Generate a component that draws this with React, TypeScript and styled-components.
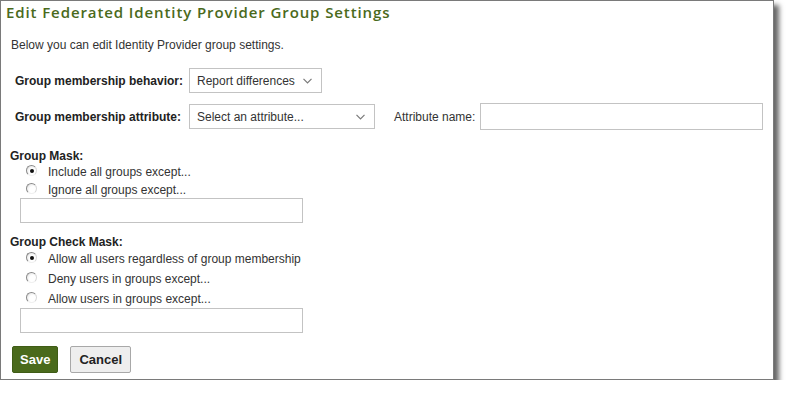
import React from "react";
import styled, { createGlobalStyle } from "styled-components";

const Global = createGlobalStyle`
  html, body { margin: 0; padding: 0; background: #ffffff; }
  body { font-family: "Liberation Sans", Arial, sans-serif; font-size: 12px; color: #333333; }
`;

const Frame = styled.div`
  width: 772px;
  border: 1px solid #7a7a7a;
  background: #ffffff;
  box-shadow: 5px 5px 5px rgba(0, 0, 0, 0.6);
`;

const Title = styled.h1`
  margin: 1px 0 0 5px;
  font-family: "Open Sans", sans-serif;
  font-weight: 600;
  font-size: 15px;
  letter-spacing: 0.9px;
  line-height: 21px;
  color: #4a6a1c;
`;

const Body = styled.div`
  padding: 0 10px 6px 9px;
`;

const Intro = styled.p`
  margin: 15px 0 0 1px;
  line-height: 14px;
  color: #333333;
`;

const FieldRow = styled.div<{ $top: number }>`
  display: flex;
  align-items: center;
  margin-top: ${(p) => p.$top}px;
  padding-left: 5px;
`;

const FieldLabel = styled.label`
  flex: none;
  width: 174px;
  font-weight: bold;
  color: #222222;
  line-height: 14px;
  white-space: nowrap;
`;

const SelectBox = styled.div<{ $width: number }>`
  flex: none;
  box-sizing: border-box;
  width: ${(p) => p.$width}px;
  height: 25px;
  border: 1px solid #c3c3c3;
  background: #ffffff;
  display: flex;
  align-items: center;
  justify-content: space-between;
  padding: 0 9px 0 7px;
  color: #333333;
  white-space: nowrap;
`;

const InlineLabel = styled.label`
  flex: none;
  margin: 0 5px 0 19px;
  color: #333333;
  white-space: nowrap;
`;

const TextInput = styled.input<{ $width: number; $height: number }>`
  flex: none;
  box-sizing: border-box;
  width: ${(p) => p.$width}px;
  height: ${(p) => p.$height}px;
  border: 1px solid #c3c3c3;
  margin: 0;
  padding: 0 4px;
  font: inherit;
  outline: none;
`;

const Section = styled.div<{ $top: number }>`
  margin-top: ${(p) => p.$top}px;
`;

const SectionTitle = styled.div`
  font-weight: bold;
  color: #222222;
  line-height: 12px;
`;

const RadioList = styled.div`
  padding: 1px 0 0 16px;
`;

const RadioRow = styled.label<{ $h: number }>`
  display: flex;
  align-items: center;
  height: ${(p) => p.$h}px;
  color: #333333;
`;

const RadioCircle = styled.span<{ $checked: boolean }>`
  box-sizing: border-box;
  width: 11px;
  height: 11px;
  border-radius: 50%;
  border: 1px solid;
  border-color: #8a8a8a #d8d8d8 #f0f0f0 #8a8a8a;
  background: radial-gradient(circle at 65% 65%, #ffffff 40%, #dcdcdc 100%);
  margin: -3px 11px 0 0;
  display: flex;
  align-items: center;
  justify-content: center;
  &::after {
    content: "";
    display: ${(p) => (p.$checked ? "block" : "none")};
    width: 4px;
    height: 4px;
    border-radius: 50%;
    background: #111111;
  }
`;

const MaskInput = styled(TextInput)`
  margin: -1px 0 0 10px;
  display: block;
`;

const ButtonRow = styled.div`
  display: flex;
  gap: 12px;
  margin-top: 13px;
  padding-left: 2px;
`;

const Button = styled.button<{ $primary?: boolean }>`
  box-sizing: border-box;
  height: 27px;
  padding: 0 ${(p) => (p.$primary ? 7 : 8)}px;
  border-radius: 2px;
  border: 1px solid ${(p) => (p.$primary ? "#3f5c16" : "#a8a8a8")};
  background: ${(p) => (p.$primary ? "#4a6a1c" : "#eeeeee")};
  color: ${(p) => (p.$primary ? "#ffffff" : "#222222")};
  font-family: "Liberation Sans", Arial, sans-serif;
  font-weight: bold;
  font-size: 13px;
  cursor: pointer;
`;

const Chevron = () => (
  <svg width="9" height="6" viewBox="0 0 9 6">
    <path d="M0.5 0.8 L4.5 4.8 L8.5 0.8" fill="none" stroke="#7a7a7a" strokeWidth="1.2" />
  </svg>
);

const Radio = ({ checked, label, h }: { checked: boolean; label: string; h: number }) => (
  <RadioRow $h={h}>
    <RadioCircle $checked={checked} />
    {label}
  </RadioRow>
);

export default function App() {
  return (
    <>
      <Global />
      <Frame>
        <Title>Edit Federated Identity Provider Group Settings</Title>
        <Body>
          <Intro>Below you can edit Identity Provider group settings.</Intro>
          <FieldRow $top={16}>
            <FieldLabel>Group membership behavior:</FieldLabel>
            <SelectBox $width={133}>
              <span>Report differences</span>
              <Chevron />
            </SelectBox>
          </FieldRow>
          <FieldRow $top={10}>
            <FieldLabel>Group membership attribute:</FieldLabel>
            <SelectBox $width={186}>
              <span>Select an attribute...</span>
              <Chevron />
            </SelectBox>
            <InlineLabel>Attribute name:</InlineLabel>
            <TextInput $width={283} $height={27} />
          </FieldRow>
          <Section $top={20}>
            <SectionTitle>Group Mask:</SectionTitle>
            <RadioList>
              <Radio h={18} checked label="Include all groups except..." />
              <Radio h={18} checked={false} label="Ignore all groups except..." />
            </RadioList>
            <MaskInput $width={283} $height={25} />
          </Section>
          <Section $top={13}>
            <SectionTitle>Group Check Mask:</SectionTitle>
            <RadioList>
              <Radio h={20} checked label="Allow all users regardless of group membership" />
              <Radio h={20} checked={false} label="Deny users in groups except..." />
              <Radio h={20} checked={false} label="Allow users in groups except..." />
            </RadioList>
            <MaskInput $width={283} $height={25} />
          </Section>
          <ButtonRow>
            <Button $primary>Save</Button>
            <Button>Cancel</Button>
          </ButtonRow>
        </Body>
      </Frame>
    </>
  );
}
